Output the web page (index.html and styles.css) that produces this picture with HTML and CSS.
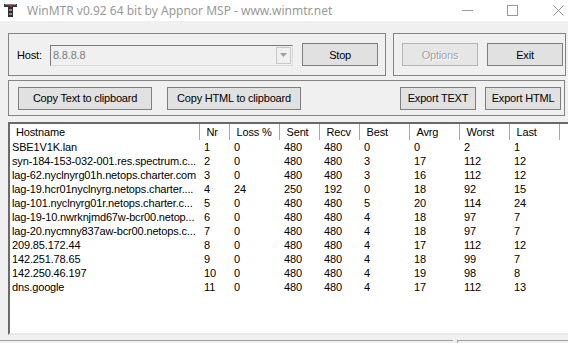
FILE: index.html
```html
<!DOCTYPE html>
<html lang="en">
<head>
    <meta charset="UTF-8">
    <title>WinMTR</title>
    <link rel="stylesheet" href="styles.css">
</head>
<body>
    <div class="titlebar">
        <svg class="app-icon" width="13" height="14" viewBox="0 0 13 14">
            <rect x="0" y="1" width="13" height="3" fill="#3a3a3a"/>
            <rect x="1" y="1" width="11" height="1" fill="#8a8a8a"/>
            <rect x="5.5" y="1.5" width="2" height="2" fill="#d23030"/>
            <rect x="4" y="4" width="5" height="10" fill="#2e2e2e"/>
            <rect x="5" y="6" width="3" height="2" fill="#8c8c8c"/>
            <rect x="5" y="10" width="3" height="2" fill="#8c8c8c"/>
        </svg>
        <span class="title">WinMTR v0.92 64 bit by Appnor MSP - www.winmtr.net</span>
        <div class="controls">
            <span class="ctl">
                <svg width="11" height="11" viewBox="0 0 11 11"><line x1="0" y1="5.5" x2="11" y2="5.5" stroke="#999" stroke-width="1"/></svg>
            </span>
            <span class="ctl">
                <svg width="11" height="11" viewBox="0 0 11 11"><rect x="0.5" y="0.5" width="10" height="10" fill="none" stroke="#999" stroke-width="1"/></svg>
            </span>
            <span class="ctl">
                <svg width="11" height="11" viewBox="0 0 11 11"><path d="M0.5 0.5 L10.5 10.5 M10.5 0.5 L0.5 10.5" stroke="#999" stroke-width="1"/></svg>
            </span>
        </div>
    </div>

    <div class="main">
        <div class="row">
            <div class="group host-group">
                <label class="host-label" for="host">Host:</label>
                <div class="combo" id="host">
                    <span class="combo-text">8.8.8.8</span>
                    <span class="combo-btn">
                        <svg width="7" height="4" viewBox="0 0 7 4"><path d="M0 0 H7 L3.5 4 Z" fill="#a0a0a0"/></svg>
                    </span>
                </div>
                <button type="button" class="btn btn-stop">Stop</button>
            </div>
            <div class="group side-group">
                <button type="button" class="btn btn-side" disabled>Options</button>
                <button type="button" class="btn btn-side">Exit</button>
            </div>
        </div>

        <div class="group copy-group">
            <button type="button" class="btn btn-copy">Copy Text to clipboard</button>
            <button type="button" class="btn btn-copy">Copy HTML to clipboard</button>
            <div class="export">
                <button type="button" class="btn btn-side">Export TEXT</button>
                <button type="button" class="btn btn-side">Export HTML</button>
            </div>
        </div>

        <div class="list">
            <table>
                <colgroup>
                    <col class="c-host"><col class="c-nr"><col class="c-loss"><col class="c-sent"><col class="c-recv">
                    <col class="c-best"><col class="c-avrg"><col class="c-worst"><col class="c-last"><col>
                </colgroup>
                <thead>
                    <tr>
                        <th>Hostname</th><th>Nr</th><th>Loss %</th><th>Sent</th><th>Recv</th>
                        <th>Best</th><th>Avrg</th><th>Worst</th><th>Last</th><th></th>
                    </tr>
                </thead>
                <tbody>
                    <tr><td>SBE1V1K.lan</td><td>1</td><td>0</td><td>480</td><td>480</td><td>0</td><td>0</td><td>2</td><td>1</td><td></td></tr>
                    <tr><td>syn-184-153-032-001.res.spectrum.c...</td><td>2</td><td>0</td><td>480</td><td>480</td><td>3</td><td>17</td><td>112</td><td>12</td><td></td></tr>
                    <tr><td>lag-62.nyclnyrg01h.netops.charter.com</td><td>3</td><td>0</td><td>480</td><td>480</td><td>3</td><td>16</td><td>112</td><td>12</td><td></td></tr>
                    <tr><td>lag-19.hcr01nyclnyrg.netops.charter....</td><td>4</td><td>24</td><td>250</td><td>192</td><td>0</td><td>18</td><td>92</td><td>15</td><td></td></tr>
                    <tr><td>lag-101.nyclnyrg01r.netops.charter.c...</td><td>5</td><td>0</td><td>480</td><td>480</td><td>5</td><td>20</td><td>114</td><td>24</td><td></td></tr>
                    <tr><td>lag-19-10.nwrknjmd67w-bcr00.netop...</td><td>6</td><td>0</td><td>480</td><td>480</td><td>4</td><td>18</td><td>97</td><td>7</td><td></td></tr>
                    <tr><td>lag-20.nycmny837aw-bcr00.netops.c...</td><td>7</td><td>0</td><td>480</td><td>480</td><td>4</td><td>18</td><td>97</td><td>7</td><td></td></tr>
                    <tr><td>209.85.172.44</td><td>8</td><td>0</td><td>480</td><td>480</td><td>4</td><td>17</td><td>112</td><td>12</td><td></td></tr>
                    <tr><td>142.251.78.65</td><td>9</td><td>0</td><td>480</td><td>480</td><td>4</td><td>18</td><td>99</td><td>7</td><td></td></tr>
                    <tr><td>142.250.46.197</td><td>10</td><td>0</td><td>480</td><td>480</td><td>4</td><td>19</td><td>98</td><td>8</td><td></td></tr>
                    <tr><td>dns.google</td><td>11</td><td>0</td><td>480</td><td>480</td><td>4</td><td>17</td><td>112</td><td>13</td><td></td></tr>
                </tbody>
            </table>
        </div>
    </div>

    <div class="statusbar">
        <div class="pane pane-main"></div>
        <div class="pane"></div>
    </div>
</body>
</html>
```

FILE: styles.css
```css
*{
    margin: 0;
    padding: 0;
    box-sizing: border-box;
}
body{
    background-color: #f0f0f0;
    font-family: "Liberation Sans", Arial, sans-serif;
    font-size: 11px;
    letter-spacing: -0.15px;
    color: #000;
    width: 568px;
    height: 343px;
    overflow: hidden;
}

/* title bar */
.titlebar{
    display: flex;
    align-items: center;
    height: 21px;
    background-color: #fff;
}
.app-icon{
    margin-left: 4px;
    margin-top: -2px;
}
.title{
    margin-left: 10px;
    font-family: "Noto Sans", "Open Sans", sans-serif;
    font-size: 12px;
    letter-spacing: 0;
    color: #999;
}
.controls{
    display: flex;
    margin-left: auto;
    margin-right: -13px;
    margin-top: -1px;
}
.ctl{
    width: 45.5px;
    display: flex;
    justify-content: center;
}

/* main area */
.main{
    padding: 12px 0 0 8px;
}
.row{
    display: flex;
    gap: 7px;
}
.group{
    display: flex;
    align-items: center;
    border: 1px solid #848484;
}
.host-group{
    width: 378px;
    height: 43px;
    padding: 0 7px 0 8px;
}
.host-label{
    width: 33px;
}
.combo{
    display: flex;
    align-items: center;
    width: 244px;
    height: 21px;
    border: 1px solid #7a7a7a;
    border-right-color: #dadada;
    border-bottom-color: #dadada;
    background-color: #f0f0f0;
    margin-top: 1px;
}
.combo-text{
    flex: 1;
    padding-left: 2px;
    color: #7c7c7c;
}
.combo-btn{
    width: 15px;
    height: 17px;
    margin-right: 1px;
    display: flex;
    align-items: center;
    justify-content: center;
    background-color: #f0f0f0;
    border: 1px solid #c8c8c8;
}
.side-group{
    width: 173px;
    height: 43px;
    padding-left: 8px;
    gap: 9px;
}

.btn{
    font-family: inherit;
    font-size: 11px;
    letter-spacing: -0.2px;
    color: #000;
    background-color: #e1e1e1;
    border: 1px solid #7e7e7e;
    height: 23px;
}
.btn:disabled{
    color: #a3a3a3;
    text-shadow: 1px 1px #fff;
    border-color: #b5b5b5;
    background-color: #e6e6e6;
}
.btn-stop{
    width: 76px;
    margin-left: 9px;
}
.btn-side{
    width: 76px;
}
.copy-group{
    width: 557px;
    height: 36px;
    margin-top: 4px;
    padding-left: 9px;
    gap: 15px;
}
.btn-copy{
    width: 134px;
}
.export{
    display: flex;
    gap: 9px;
    margin-left: auto;
    margin-right: 3px;
}

/* results list */
.list{
    width: 562px;
    height: 213px;
    margin-top: 6px;
    background-color: #fff;
    border-style: solid;
    border-width: 2px 0 2px 2px;
    border-color: #696969 #e3e3e3 #e8e8e8 #6a6a6a;
    overflow: hidden;
}
table{
    border-collapse: collapse;
    table-layout: fixed;
    width: 580px;
}
.c-host{ width: 189px; }
.c-nr{ width: 30px; }
.c-loss{ width: 50px; }
.c-sent{ width: 40px; }
.c-recv{ width: 40px; }
.c-best{ width: 50px; }
.c-avrg{ width: 50px; }
.c-worst{ width: 50px; }
.c-last{ width: 50px; }
th{
    height: 16px;
    font-weight: normal;
    text-align: left;
    padding-left: 7px;
    border-right: 1px solid #a8a8a8;
    white-space: nowrap;
}
th:first-child{
    padding-left: 6px;
}
td{
    height: 14px;
    padding-left: 5px;
    white-space: nowrap;
    overflow: hidden;
    line-height: 14px;
}
td:first-child{
    padding-left: 2px;
}

/* status bar */
.statusbar{
    display: flex;
    gap: 4px;
    margin-top: 5px;
}
.pane{
    flex: 1;
    height: 6px;
    border-top: 1px solid #a0a0a0;
    border-left: 1px solid #a0a0a0;
}
.pane-main{
    flex: 0 0 453px;
    border-left: 0;
}
```
